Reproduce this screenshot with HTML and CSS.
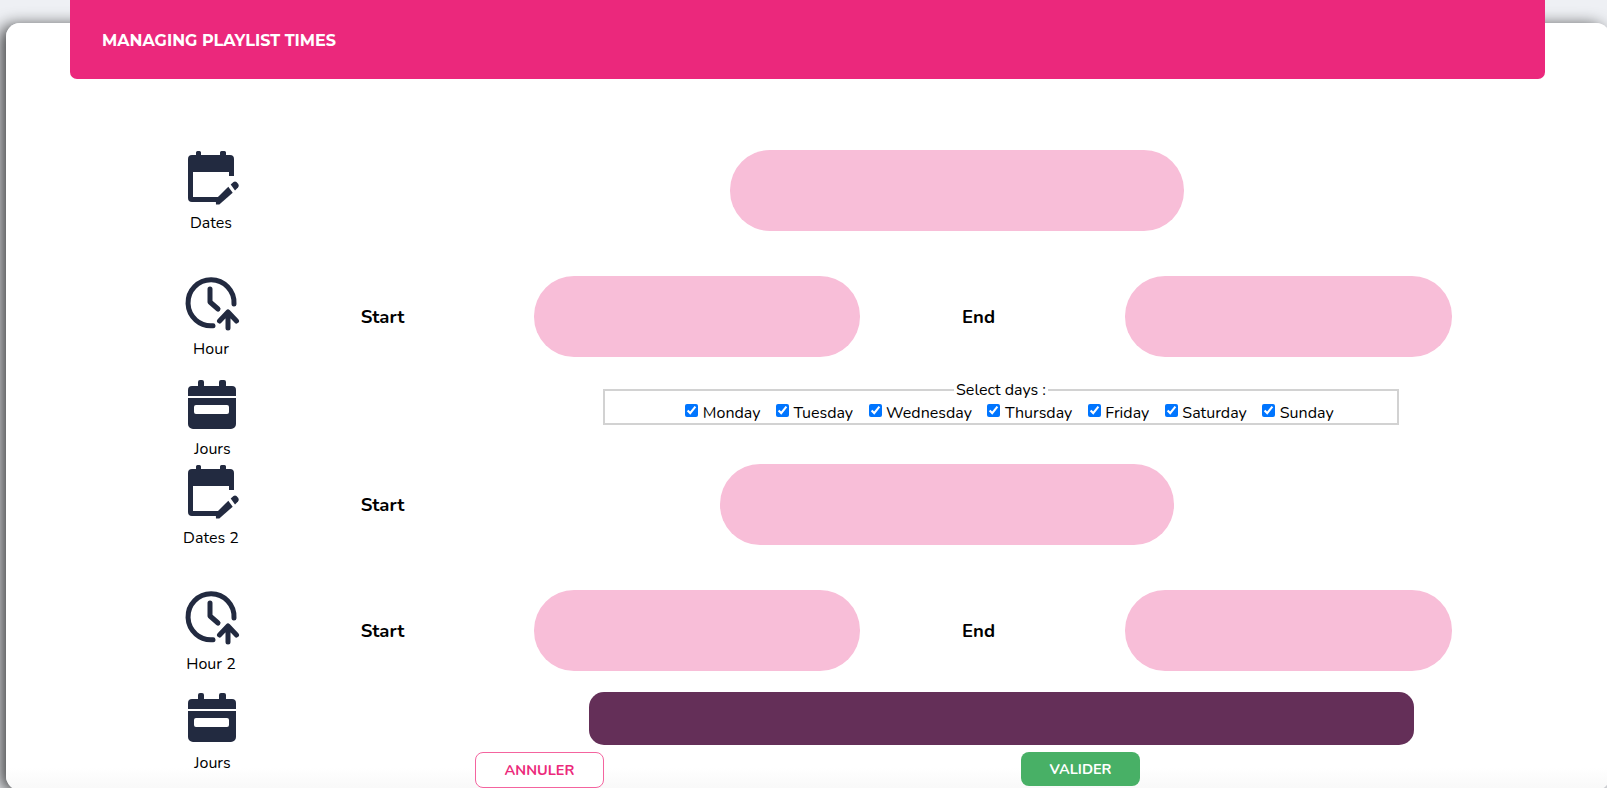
FILE: index.html
```html
<!DOCTYPE html>
<html lang="en">
<head>
<meta charset="utf-8">
<title>Managing playlist times</title>
<link rel="stylesheet" href="styles.css">
</head>
<body>
<svg class="defs" width="0" height="0" aria-hidden="true">
  <defs>
    <symbol id="cal-edit" viewBox="0 0 52 54">
      <path d="M4 4h4V1.500A1.500 1.500 0 0 1 9.500 0h2A1.500 1.500 0 0 1 13 1.500V4h19V1.500A1.500 1.500 0 0 1 33.500 0h3A1.500 1.500 0 0 1 38 1.500V4h4a4 4 0 0 1 4 4v17h-5V21H5v25h29v5H4a4 4 0 0 1-4-4V8a4 4 0 0 1 4-4z"/>
      <path d="M28 53.500l-.3-5.200 12.600-12.600 4.400 6-13.400 11.800z"/>
      <path d="M42.700 33.500l2.800-2.500q1.500-1 3 0l1.800 2q1.200 2-.3 3.500l-3 3z"/>
    </symbol>
    <symbol id="clock-up" viewBox="0 0 56 56">
      <g fill="none" stroke="currentColor" stroke-width="5" stroke-linecap="round" stroke-linejoin="round">
        <path d="M50 28A23 23 0 1 0 29 49.700"/>
        <path d="M26 13v13l8 7"/>
        <path d="M44 52V36M35.500 45l8.500-9 8.500 9"/>
      </g>
    </symbol>
    <symbol id="cal-day" viewBox="0 0 48 49">
      <path d="M4 6h6V2a2 2 0 0 1 2-2h2a2 2 0 0 1 2 2v4h15V2a2 2 0 0 1 2-2h3a2 2 0 0 1 2 2v4h6a4 4 0 0 1 4 4v6H0v-6a4 4 0 0 1 4-4z"/>
      <path fill-rule="evenodd" d="M0 18h48v26a5 5 0 0 1-5 5H5a5 5 0 0 1-5-5zM8 25a2 2 0 0 0-2 2v5a2 2 0 0 0 2 2h31a2 2 0 0 0 2-2v-5a2 2 0 0 0-2-2z"/>
    </symbol>
  </defs>
</svg>
<main class="card">
  <header class="banner"><h1 class="banner-title">Managing playlist times</h1></header>
  <section class="schedule">
    <div class="tool"><svg class="icon icon-edit"><use href="#cal-edit"/></svg><span class="tool-label">Dates</span></div>
    <div class="pill pill-wide pill-first"></div>

    <div class="tool"><svg class="icon icon-clock"><use href="#clock-up"/></svg><span class="tool-label">Hour</span></div>
    <div class="field-label">Start</div>
    <div class="pill"></div>
    <div class="field-label field-end">End</div>
    <div class="pill"></div>

    <div class="tool tool-day"><svg class="icon icon-day"><use href="#cal-day"/></svg><span class="tool-label">Jours</span></div>
    <fieldset class="days">
      <legend class="days-legend">Select days :</legend>
      <label class="day"><input type="checkbox" checked>Monday</label>
      <label class="day"><input type="checkbox" checked>Tuesday</label>
      <label class="day"><input type="checkbox" checked>Wednesday</label>
      <label class="day"><input type="checkbox" checked>Thursday</label>
      <label class="day"><input type="checkbox" checked>Friday</label>
      <label class="day"><input type="checkbox" checked>Saturday</label>
      <label class="day"><input type="checkbox" checked>Sunday</label>
    </fieldset>

    <div class="tool tool-dates2"><svg class="icon icon-edit"><use href="#cal-edit"/></svg><span class="tool-label">Dates 2</span></div>
    <div class="field-label">Start</div>
    <div class="pill pill-wide pill-second"></div>

    <div class="tool tool-hour2"><svg class="icon icon-clock"><use href="#clock-up"/></svg><span class="tool-label">Hour 2</span></div>
    <div class="field-label">Start</div>
    <div class="pill"></div>
    <div class="field-label field-end">End</div>
    <div class="pill"></div>

    <div class="tool tool-day tool-last"><svg class="icon icon-day"><use href="#cal-day"/></svg><span class="tool-label">Jours</span></div>
    <div class="bar"></div>
  </section>
  <footer class="actions">
    <button class="btn btn-cancel" type="button">Annuler</button>
    <button class="btn btn-ok" type="button">Valider</button>
  </footer>
</main>
</body>
</html>
```

FILE: styles.css
```css
* { box-sizing: border-box; }

html, body {
  height: 788px;
  margin: 0;
  overflow: hidden;
}

body {
  background: #eef0f4;
  font-family: "Nunito", "Lato", "Open Sans", sans-serif;
  color: #000;
  padding: 23px 0 0 6px;
}

.defs { display: block; height: 0; }

.card {
  display: flow-root;
  width: 1604px;
  height: 767px;
  background: linear-gradient(#fff 745px, #f8f8f8);
  border-radius: 14px;
  box-shadow: -6px 2px 16px rgba(0, 0, 0, .7);
}

.banner {
  height: 79px;
  width: 1475px;
  margin: -23px 0 0 64px;
  padding: 2px 0 0 32px;
  display: flex;
  align-items: center;
  background: #eb287c;
  border-radius: 0 0 7px 7px;
}

.banner-title {
  margin: 0;
  color: #fff;
  font: 700 16px "Montserrat", "Inter", "Open Sans", sans-serif;
  text-transform: uppercase;
}

.schedule {
  display: grid;
  grid-template-columns: 100px 273px 326px 265px 327px;
  grid-template-rows: 126px 104px 84px 126px 102px 60px;
  margin: 71px 0 0 155px;
}

.tool {
  display: flex;
  flex-direction: column;
  align-items: center;
  grid-column: 1;
}

.tool-label {
  font-size: 16px;
  line-height: 20px;
  white-space: nowrap;
}

.tool-day .tool-label { margin-left: 3px; }

.icon { display: block; flex: none; fill: #222a40; color: #222a40; }
.icon-edit { width: 52px; height: 54px; margin: 1px 0 8px 6px; }
.icon-clock { width: 56px; height: 56px; margin: 0 0 7px 2px; }
.icon-day { width: 48px; height: 49px; margin: 0 0 10px 2px; }
.tool-dates2 .icon { margin-top: 1px; margin-bottom: 9px; }
.tool-hour2 .icon { margin-bottom: 8px; }
.tool-last .icon { margin-top: 1px; margin-bottom: 11px; }

.field-label {
  height: 81px;
  padding: 1px 30px 0 0;
  display: flex;
  align-items: center;
  justify-content: center;
  font-size: 18.500px;
  font-weight: 700;
}

.field-end { padding-right: 28px; }

.pill {
  height: 80.500px;
  background: #f8bed8;
  border-radius: 40px;
}

.pill-wide { width: 454px; }
.pill-first { grid-column: 3 / -1; margin-left: 196px; }
.pill-second { grid-column: 3 / -1; margin-left: 186px; }

.days {
  grid-column: 3 / -1;
  align-self: start;
  width: 796px;
  height: 45px;
  margin: 0 0 0 69px;
  padding: 2px 0 0;
  min-width: 0;
  border: 2px solid #d2d2d2;
  display: flex;
  justify-content: center;
  gap: 15.500px;
}

.days-legend {
  margin: 0 auto;
  padding: 0 2px;
  font-size: 16px;
  line-height: 20px;
  text-align: center;
}

.day {
  display: flex;
  align-items: center;
  font-size: 16px;
  line-height: 22px;
  white-space: nowrap;
}

.day:first-of-type { margin-left: 17px; }

.day input {
  width: 13px;
  height: 13px;
  margin: 0 4.500px 4px 0;
  accent-color: #0075ff;
}

.bar {
  grid-column: 3 / -1;
  height: 53px;
  margin: 0 38px 0 55px;
  background: #642f58;
  border-radius: 15px;
}

.actions {
  display: flex;
  align-items: flex-start;
  margin: 0 0 0 469px;
}

.btn {
  font: 700 14.500px "Nunito", "Lato", "Open Sans", sans-serif;
  text-transform: uppercase;
  border-radius: 8px;
  padding: 0;
}

.btn-cancel {
  width: 129px;
  height: 36px;
  color: #ec297b;
  background: #fff;
  border: 1.500px solid #f4649f;
}

.btn-ok {
  width: 119px;
  height: 34px;
  margin-left: 417px;
  color: #fff;
  background: #48b066;
  border: 0;
}
```
